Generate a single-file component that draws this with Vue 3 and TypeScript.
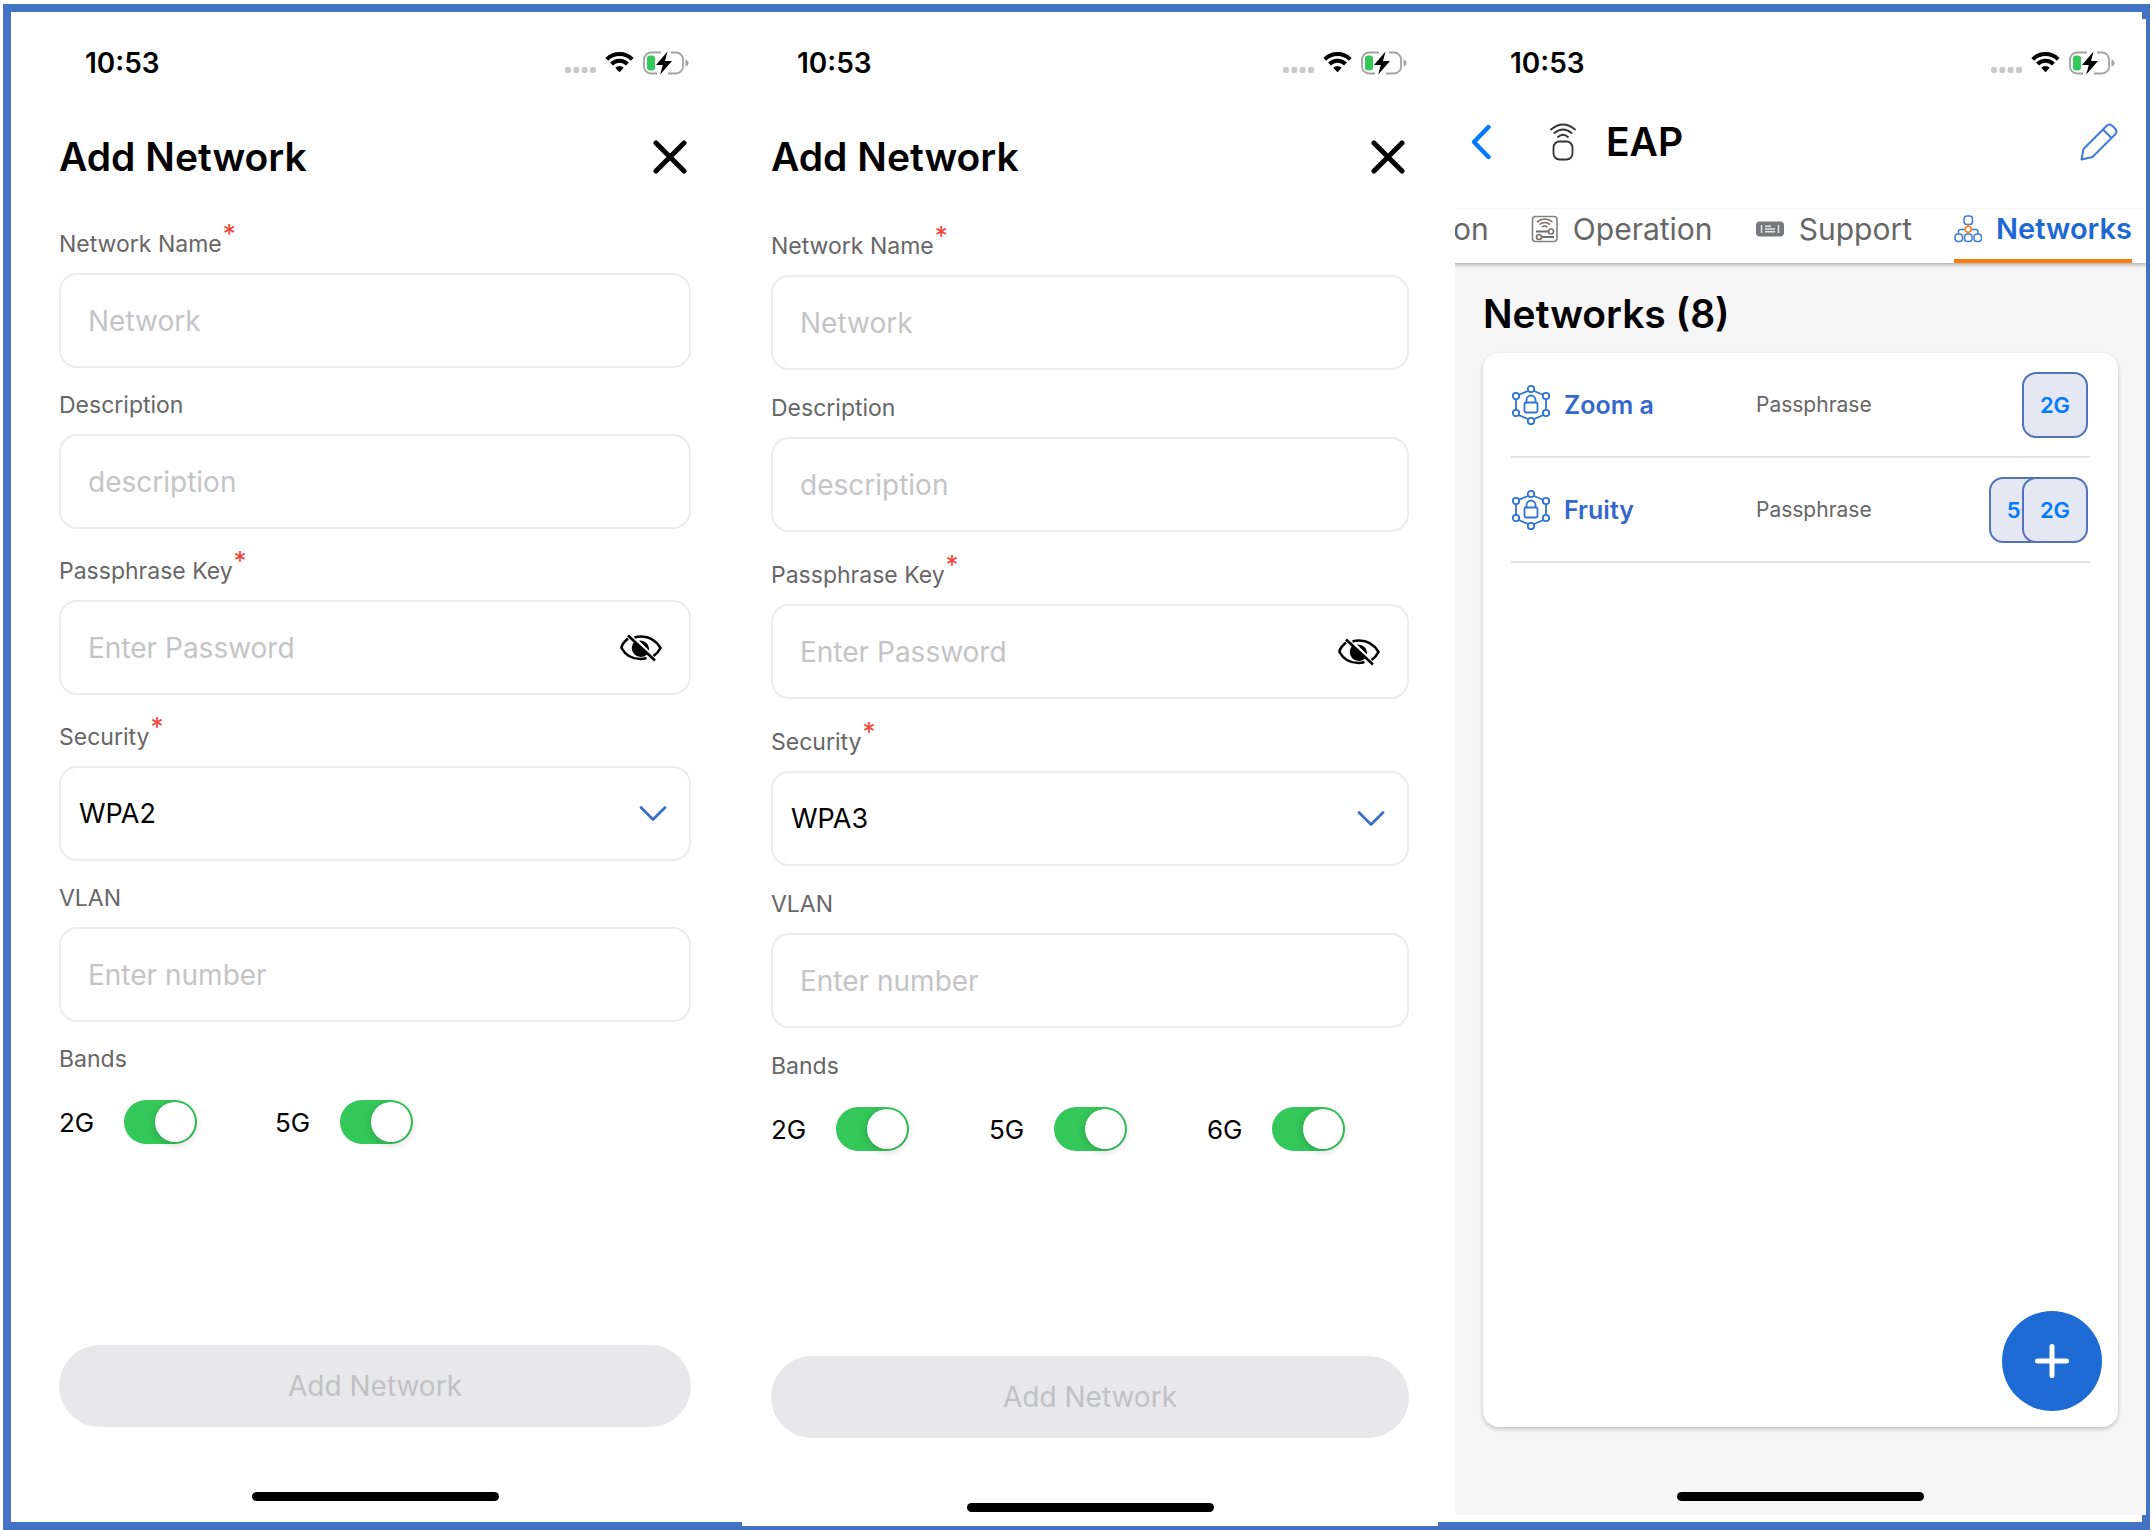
<script setup lang="ts">
import { ref } from 'vue'

interface Band { name: string; on: boolean }
interface Form { id: string; size: string; security: string; bands: Band[] }
interface Network { name: string; auth: string; bands: string[] }

const forms = ref<Form[]>([
  { id: 'wpa2', size: 'phone-a', security: 'WPA2', bands: [{ name: '2G', on: true }, { name: '5G', on: true }] },
  {
    id: 'wpa3', size: 'phone-b', security: 'WPA3',
    bands: [{ name: '2G', on: true }, { name: '5G', on: true }, { name: '6G', on: true }],
  },
])

const networks: Network[] = [
  { name: 'Zoom a', auth: 'Passphrase', bands: ['2G'] },
  { name: 'Fruity', auth: 'Passphrase', bands: ['5G', '2G'] },
]

const nodes = [[20, 4], [35, 11], [35, 28], [20, 36], [5, 28], [5, 11]]
</script>

<template>
  <svg class="defs" aria-hidden="true">
    <symbol id="status-icons" viewBox="0 0 124 32">
      <g fill="#c9c9cb">
        <rect x="0" y="20" width="6" height="6" rx="2" /><rect x="8.300" y="20" width="6" height="6" rx="2" />
        <rect x="16.600" y="20" width="6" height="6" rx="2" /><rect x="25" y="20" width="6" height="6" rx="2" />
      </g>
      <g fill="none" stroke="#000" stroke-width="4">
        <path d="M41.800 12.300A18 18 0 0 1 67.200 12.300" /><path d="M46.500 17A11.300 11.300 0 0 1 62.500 17" />
      </g>
      <path d="M50.300 20.800a6 6 0 0 1 8.400 0L54.500 25.300z" />
      <path d="M96 5.500H86a7 7 0 0 0-7 7v7a7 7 0 0 0 7 7h6M103 26.500h8a7 7 0 0 0 7-7v-7a7 7 0 0 0-7-7h-5" fill="none" stroke="#a3a3a5" stroke-width="1.800" />
      <path d="M120.500 12.500q3 1 3 3.500t-3 3.500z" fill="#a3a3a5" />
      <rect x="82" y="8.500" width="8" height="15" rx="3" fill="#34c759" />
      <path d="M102.500 4.500L91 18h6.800l-2.600 9.500L107 14h-7z" />
    </symbol>
  </svg>
  <main class="board">
    <section v-for="form in forms" :key="form.id" class="phone" :class="form.size">
      <div class="status">
        <span>10:53</span>
        <svg class="status-icons"><use href="#status-icons" /></svg>
      </div>
      <form class="form" @submit.prevent>
        <header class="form-head">
          <h1>Add Network</h1>
          <button type="button" class="icon-btn" aria-label="Close">
            <svg width="34" height="34" viewBox="0 0 34 34"><path d="M3 3l28 28M31 3L3 31" stroke="#000" stroke-width="5" stroke-linecap="round" /></svg>
          </button>
        </header>

        <label class="label required" :for="form.id + '-name'">Network Name<sup>*</sup></label>
        <input :id="form.id + '-name'" class="control" type="text" placeholder="Network" />

        <label class="label" :for="form.id + '-desc'">Description</label>
        <input :id="form.id + '-desc'" class="control" type="text" placeholder="description" />

        <label class="label required" :for="form.id + '-key'">Passphrase Key<sup>*</sup></label>
        <div class="control with-icon">
          <input :id="form.id + '-key'" type="password" placeholder="Enter Password" />
          <button type="button" class="icon-btn" aria-label="Show password">
            <svg width="42" height="40" viewBox="0 0 42 40" fill="none" stroke="#000" stroke-width="2.600">
              <path d="M8 10.500Q1.500 16 1.500 20q6 11 19 11 3 0 6-1M14.500 9.500q3-1 6.500-1 13 0 19.500 11.500-2.500 5-7 8" />
              <path d="M14.500 13.500a9 9 0 0 0 12.500 13zM19 12.500a9 9 0 0 1 10 10z" fill="#000" stroke="none" />
              <path d="M8 7.500l27 25" />
            </svg>
          </button>
        </div>

        <label class="label required" :for="form.id + '-sec'">Security<sup>*</sup></label>
        <div class="control select">
          <select :id="form.id + '-sec'" v-model="form.security">
            <option>WPA2</option>
            <option>WPA3</option>
          </select>
          <svg width="28" height="18" viewBox="0 0 28 18"><path d="M2 2.500l12 12 12-12" fill="none" stroke="#3a6fd0" stroke-width="2.800" stroke-linecap="round" stroke-linejoin="round" /></svg>
        </div>

        <label class="label" :for="form.id + '-vlan'">VLAN</label>
        <input :id="form.id + '-vlan'" class="control" type="text" inputmode="numeric" placeholder="Enter number" />

        <div class="label">Bands</div>
        <div class="bands">
          <label v-for="band in form.bands" :key="band.name" class="band">
            <span>{{ band.name }}</span>
            <input v-model="band.on" type="checkbox" role="switch" />
          </label>
        </div>

        <button type="submit" class="submit" disabled>Add Network</button>
      </form>
      <div class="home"></div>
    </section>

    <section class="phone phone-c">
      <div class="status">
        <span>10:53</span>
        <svg class="status-icons"><use href="#status-icons" /></svg>
      </div>
      <header class="device-head">
        <button type="button" class="icon-btn" aria-label="Back">
          <svg width="22" height="36" viewBox="0 0 22 36"><path d="M18.500 3L4 18l14.500 15" fill="none" stroke="#007aff" stroke-width="4.400" stroke-linecap="round" stroke-linejoin="round" /></svg>
        </button>
        <svg class="device-icon" width="28" height="38" viewBox="0 0 28 38" fill="none" stroke="#333" stroke-width="1.800" stroke-linecap="round">
          <rect x="4.500" y="18.500" width="19" height="18" rx="6" />
          <path d="M2 6.500Q14-3.500 26 6.500M5.500 10Q14 3 22.500 10M9 14q5-4.500 10 0" />
        </svg>
        <h1>EAP</h1>
        <button type="button" class="icon-btn edit" aria-label="Edit">
          <svg width="38" height="38" viewBox="0 0 38 38" fill="none" stroke="#3f7bd9" stroke-width="2" stroke-linejoin="round">
            <path d="M1.500 36.500L3.500 26 26.500 3q3-3 6 0l2.500 2.500q3 3 0 6L12.500 34zM23 6.500l8.500 8.500" />
          </svg>
        </button>
      </header>
      <nav class="tabs">
        <a href="#configuration">on</a>
        <a href="#operation">
          <svg width="28" height="28" viewBox="0 0 28 28" fill="none" stroke="#77706c" stroke-width="1.600">
            <rect x="1.500" y="1.500" width="24.500" height="25" rx="3" stroke="#808285" />
            <path d="M6 7q8-6 15.500 0M8.500 9.500q5-4 10.500 0M11 12q2.500-2 5.500 0" />
            <path d="M5 16.500h12M11 22h12" stroke="#6d6e71" stroke-width="2" />
            <circle cx="20" cy="16.500" r="2.500" /><circle cx="8" cy="22" r="2.500" />
          </svg>
          Operation
        </a>
        <a href="#support">
          <svg width="30" height="28" viewBox="0 0 30 28" fill="none" stroke="#e6e6e6" stroke-width="1.400">
            <rect x="1" y="6.500" width="28" height="15" rx="4" fill="#77797c" stroke="none" />
            <path d="M6.500 10v8M23.500 10v8M10 11.200h6M10 14h10M10 16.800h10" />
          </svg>
          Support
        </a>
        <a href="#networks" class="active">
          <svg width="28" height="28" viewBox="0 0 28 28" fill="none" stroke="#3f7bd9" stroke-width="1.500">
            <rect x="10" y="1" width="8.500" height="8.500" rx="3" />
            <rect x="1" y="19" width="7.500" height="7.500" rx="3" /><rect x="10.500" y="19" width="7.500" height="7.500" rx="3" /><rect x="20" y="19" width="7.500" height="7.500" rx="3" />
            <path d="M4.500 19v-2.500q0-2 2-2h4.500M17.500 14.500h4.500q2 0 2 2V19" />
            <circle cx="14.200" cy="14.300" r="3" stroke="#f58220" /><path d="M14.200 9.500v1.800M14.200 17.300V19" stroke="#f58220" />
          </svg>
          Networks
        </a>
      </nav>
      <div class="content">
        <h2>Networks (8)</h2>
        <div class="card">
          <ul>
            <li v-for="net in networks" :key="net.name">
              <svg width="40" height="40" viewBox="0 0 40 40" fill="none" stroke="#2f74d0" stroke-width="1.800">
                <path d="M17 6l-9.500 4M23 6l9.500 4M5 14v11M35 14v11M7.500 30l9.500 4M32.500 30l-9.500 4" />
                <circle v-for="(n, i) in nodes" :key="i" :cx="n[0]" :cy="n[1]" r="3.200" />
                <rect x="13.500" y="17.500" width="13" height="10" rx="1.500" />
                <path d="M15.500 17.500v-2.500a4.500 4.500 0 0 1 9 0v2.500" />
              </svg>
              <a href="#network" class="name">{{ net.name }}</a>
              <span class="auth">{{ net.auth }}</span>
              <span class="badges"><span v-for="b in net.bands" :key="b" class="badge">{{ b }}</span></span>
            </li>
          </ul>
          <button type="button" class="fab" aria-label="Add network">
            <svg width="36" height="36" viewBox="0 0 36 36"><path d="M18 3.500v29M3.500 18h29" stroke="#fff" stroke-width="5" stroke-linecap="round" /></svg>
          </button>
        </div>
      </div>
      <div class="home"></div>
    </section>
  </main>
</template>

<style>
body {
  margin: 0;
  background: #fff;
}
</style>

<style scoped>
* {
  box-sizing: border-box;
}
.defs {
  position: absolute;
  width: 0;
  height: 0;
}
.board {
  display: flex;
  min-height: calc(100vh - 4px);
  margin: 4px 4px 0 3px;
  padding-left: 19px;
  border: 8px solid #4472c4;
  background: #fff;
  font-family: Inter, "Liberation Sans", sans-serif;
  color: #000;
}
.phone {
  display: flex;
  flex-direction: column;
  min-width: 0;
  background: #fff;
}
.phone-a {
  flex: 690 1 0;
  margin-right: 22px;
  --gap: 22px;
  --pitch: 216px;
  --foot: 21px;
}
.phone-b {
  flex: 696 1 0;
  margin-right: 17px;
  margin-bottom: -4px;
  --gap: 23px;
  --pitch: 218px;
  --foot: 14px;
}
.phone-c {
  flex: 691 1 0;
  margin: 7px -4px 7px 0;
  background: linear-gradient(#fff 244px, #f6f6f6 244px);
  --foot: 14px;
}
h1,
h2 {
  margin: 0;
  font-size: 39px;
  line-height: 48px;
  font-weight: 600;
}
.status {
  display: flex;
  justify-content: space-between;
  align-items: center;
  height: 32px;
  margin: 35px 31px 0 55px;
  font-size: 28px;
  font-weight: 600;
}
.phone-c .status {
  margin-top: 28px;
}
.status-icons {
  width: 124px;
  height: 32px;
}
.icon-btn {
  display: flex;
  padding: 0;
  border: 0;
  background: none;
}
.form {
  display: flex;
  flex: 1;
  flex-direction: column;
  padding: 0 29px;
}
.form-head {
  display: flex;
  justify-content: space-between;
  align-items: center;
  margin: 54px 4px 21px 0;
}
.phone-b .form-head {
  margin-bottom: 22px;
}
.label {
  padding-top: var(--gap);
  margin-bottom: 14px;
  font-size: 23px;
  line-height: 30px;
  color: #666;
}
.required {
  padding-top: calc(var(--gap) + 5px);
}
sup {
  margin-left: 1px;
  font-size: 26px;
  line-height: 0;
  color: #f44336;
}
.control {
  flex: none;
  width: 100%;
  height: 95px;
  padding: 0 27px;
  border: 2px solid #ececec;
  border-radius: 18px;
  background: #fff;
}
.control,
.control input {
  font-family: inherit;
  font-size: 28px;
  color: #000;
}
.control select {
  font-family: inherit;
  font-size: 27px;
  color: #000;
}
.with-icon,
.select {
  display: flex;
  align-items: center;
}
.control input,
.control select {
  flex: 1;
  min-width: 0;
  height: 100%;
  padding: 0;
  border: 0;
  background: none;
  appearance: none;
}
input::placeholder {
  color: #c4c4c6;
  opacity: 1;
}
.select {
  padding: 0 22px 0 18px;
}
.bands {
  display: flex;
  margin-top: 12px;
  font-size: 26px;
}
.band {
  display: flex;
  flex: none;
  align-items: center;
  width: var(--pitch);
}
.band:last-child {
  width: auto;
}
.band span {
  width: 65px;
}
.band input {
  width: 73px;
  height: 44px;
  margin: 0;
  padding: 2px;
  border-radius: 22px;
  background: #ddd;
  appearance: none;
}
.band input::before {
  display: block;
  width: 40px;
  height: 40px;
  border-radius: 50%;
  background: #fff;
  box-shadow: 0 2px 8px rgba(0, 0, 0, 0.2);
  content: "";
}
.band input:checked {
  background: #34c759;
}
.band input:checked::before {
  margin-left: auto;
}
.submit {
  height: 82px;
  margin: auto 0 65px;
  border: 0;
  border-radius: 41px;
  background: #e8e8ea;
  font-family: inherit;
  font-size: 28px;
  color: #c1c1c4;
}
.home {
  flex: none;
  align-self: center;
  width: 247px;
  height: 9px;
  margin-bottom: var(--foot);
  border-radius: 5px;
  background: #000;
}
.device-head {
  display: flex;
  align-items: center;
  margin: 39px 28px 42px 15px;
}
.device-icon {
  margin: 0 29px 0 57px;
}
.edit {
  margin-left: auto;
}
.tabs {
  display: flex;
  justify-content: space-between;
  height: 55px;
  margin-left: -2px;
  padding-right: 14px;
  border-top: 1px solid #f7f7f7;
  box-shadow: 0 2px 4px rgba(0, 0, 0, 0.3);
  clip-path: inset(0 0 -8px 2px);
}
.tabs a {
  display: flex;
  gap: 14px;
  height: 54px;
  padding-top: 2px;
  font-size: 30px;
  line-height: 36px;
  color: #666;
  text-decoration: none;
}
.tabs svg {
  margin-top: 4px;
}
.tabs .active {
  border-bottom: 4px solid #f97c0b;
  font-size: 29px;
  color: #1d68d2;
  font-weight: 600;
}
.content {
  display: flex;
  flex: 1;
  flex-direction: column;
  padding: 27px 28px 65px;
}
.card {
  display: flex;
  flex: 1;
  flex-direction: column;
  justify-content: space-between;
  margin-top: 15px;
  padding: 0 16px 16px 28px;
  border-radius: 16px;
  background: #fff;
  box-shadow: 0 2px 4px rgba(0, 0, 0, 0.22);
}
ul {
  margin: 0 12px 0 0;
  padding: 0;
  list-style: none;
}
li {
  display: flex;
  align-items: center;
  height: 105px;
  padding-right: 2px;
  border-bottom: 2px solid #e2e2e2;
}
.name {
  width: 192px;
  margin-left: 13px;
  font-size: 25px;
  font-weight: 600;
  color: #3467cb;
  text-decoration: none;
}
.auth {
  font-size: 21px;
  color: #666;
}
.badges {
  display: flex;
  margin-left: auto;
}
.badge {
  width: 66px;
  height: 66px;
  border: 2px solid #5273bd;
  border-radius: 14px;
  background: #e5e7f3;
  font-size: 22px;
  line-height: 62px;
  font-weight: 600;
  text-align: center;
  color: #007aff;
}
.badge + .badge {
  margin-left: -33px;
}
.fab {
  display: flex;
  align-items: center;
  justify-content: center;
  align-self: flex-end;
  width: 100px;
  height: 100px;
  border: 0;
  border-radius: 50%;
  background: #1e6bd6;
}
</style>
